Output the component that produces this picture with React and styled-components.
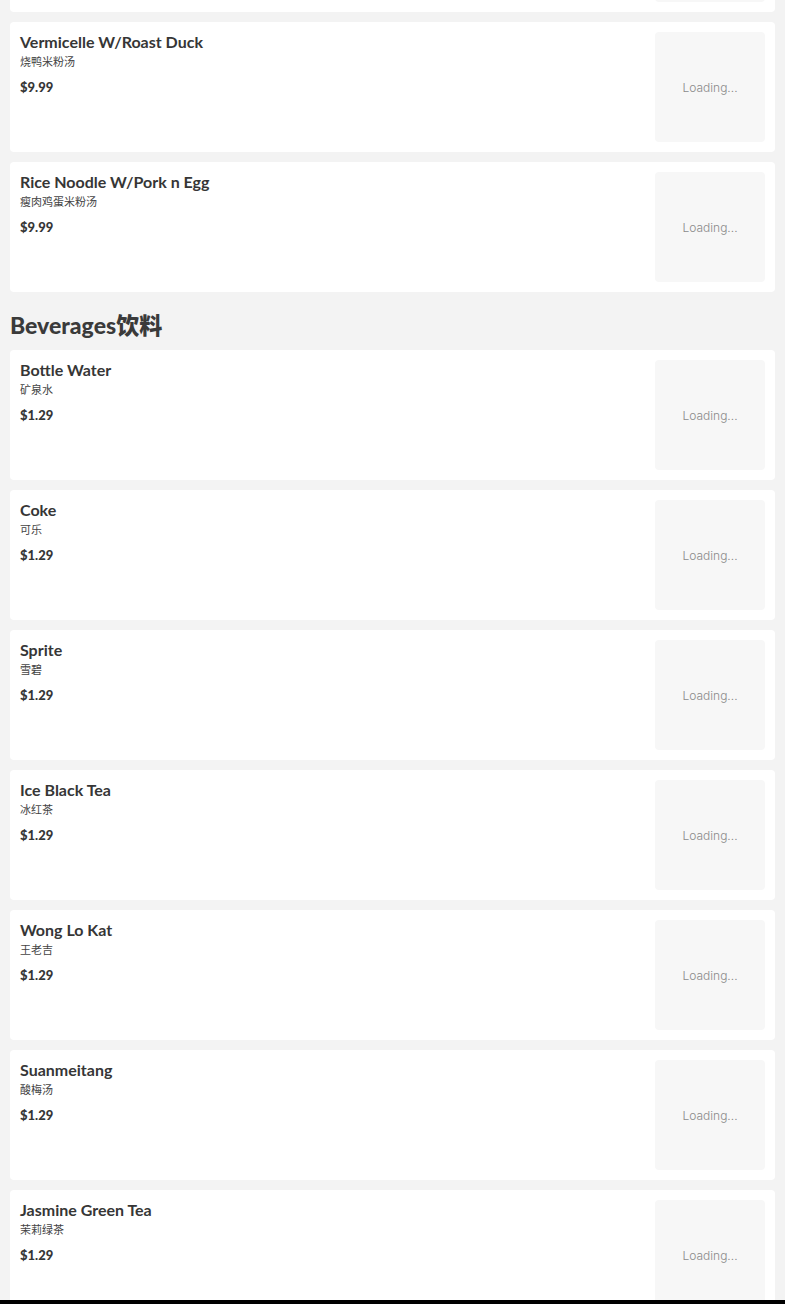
import styled, { createGlobalStyle } from 'styled-components';

const GlobalStyle = createGlobalStyle`
  html, body {
    margin: 0;
    padding: 0;
    background: #f3f3f3;
    font-family: Lato, "Noto Sans CJK SC", sans-serif;
    color: #363636;
  }
`;

const sections = [
  {
    title: null,
    items: [
      { name: 'Beef Noodle Soup', zh: '牛肉粉汤', price: '9.99' },
      { name: 'Vermicelle W/Roast Duck', zh: '烧鸭米粉汤', price: '9.99' },
      { name: 'Rice Noodle W/Pork n Egg', zh: '瘦肉鸡蛋米粉汤', price: '9.99' },
    ],
  },
  {
    title: 'Beverages饮料',
    items: [
      { name: 'Bottle Water', zh: '矿泉水', price: '1.29' },
      { name: 'Coke', zh: '可乐', price: '1.29' },
      { name: 'Sprite', zh: '雪碧', price: '1.29' },
      { name: 'Ice Black Tea', zh: '冰红茶', price: '1.29' },
      { name: 'Wong Lo Kat', zh: '王老吉', price: '1.29' },
      { name: 'Suanmeitang', zh: '酸梅汤', price: '1.29' },
      { name: 'Jasmine Green Tea', zh: '茉莉绿茶', price: '1.29' },
    ],
  },
];

const App = () => {
  return (
    <>
      <GlobalStyle />
      <Page>
        {sections.map((s, i) => (
          <Section key={i}>
            {s.title && <Heading>{s.title}</Heading>}
            {s.items.map((item) => (
              <Card key={item.name}>
                <Info>
                  <Name>{item.name}</Name>
                  <Chinese>{item.zh}</Chinese>
                  <Price>${item.price}</Price>
                </Info>
                <Thumb>Loading...</Thumb>
              </Card>
            ))}
          </Section>
        ))}
      </Page>
      <BottomBar />
    </>
  );
};

const Page = styled.div`
  margin-top: -118px;
  padding: 0 10px 20px;
  display: flex;
  flex-direction: column;
`;

const Section = styled.section`
  display: flex;
  flex-direction: column;
  gap: 10px;
`;

const Heading = styled.h2`
  margin: 18px 0 0;
  font-size: 23px;
  line-height: 30px;
  font-weight: 900;
  color: #3a3a3a;
`;

const Card = styled.div`
  display: flex;
  justify-content: space-between;
  background: #fff;
  border-radius: 4px;
  padding: 10px;
  height: 130px;
  box-sizing: border-box;
`;

const Info = styled.div`
  display: flex;
  flex-direction: column;
`;

const Name = styled.div`
  font-size: 16px;
  font-weight: 700;
  line-height: 20px;
  color: #363636;
`;

const Chinese = styled.div`
  margin-top: 1px;
  font-size: 11px;
  line-height: 18px;
  color: #444;
`;

const Price = styled.div`
  margin-top: 7px;
  font-size: 13px;
  font-weight: 900;
  line-height: 18px;
  color: #363636;
`;

const Thumb = styled.div`
  width: 110px;
  height: 110px;
  border-radius: 4px;
  background: #f7f7f7;
  display: flex;
  align-items: center;
  justify-content: center;
  font-family: Inter, sans-serif;
  font-weight: 300;
  font-size: 12px;
  color: #8a8a8a;
`;

const BottomBar = styled.div`
  position: fixed;
  left: 0;
  right: 0;
  bottom: 0;
  height: 4px;
  background: #000;
`;

export default App;
